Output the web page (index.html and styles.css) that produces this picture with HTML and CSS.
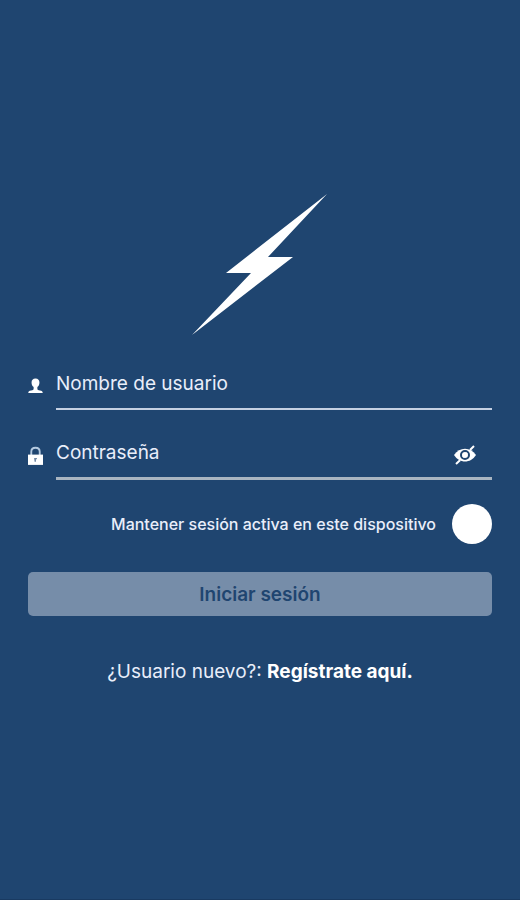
FILE: index.html
```html
<!DOCTYPE html>
<html lang="es">
<head>
<meta charset="utf-8">
<meta name="viewport" content="width=device-width, initial-scale=1">
<title>Iniciar sesión</title>
<link rel="stylesheet" href="styles.css">
</head>
<body>
<main class="login">
  <svg class="logo" viewBox="0 0 136 142" aria-hidden="true"><path d="M135 0 34 79H59L0 141 101 63H76Z"/></svg>
  <form class="form">
    <div class="field">
      <label class="field-icon" for="user">
        <svg viewBox="0 0 16 20" aria-hidden="true"><path d="M8 2C5.200 2 3.800 3.800 3.800 6.200c0 2.200.8 3.900 2.200 4.900v2.200c0 .9-1 1.200-2.700 1.600C1.200 15.300.3 15.900.3 17.500h15.400c0-1.600-.9-2.200-3-2.600-1.700-.4-2.700-.7-2.700-1.600v-2.200c1.400-1 2.200-2.700 2.200-4.900C12.200 3.800 10.800 2 8 2Z"/></svg>
      </label>
      <div class="box">
        <input id="user" class="input" type="text" placeholder="Nombre de usuario" aria-label="Nombre de usuario">
      </div>
    </div>
    <div class="field">
      <label class="field-icon" for="pass">
        <svg viewBox="0 0 16 20" aria-hidden="true"><path class="shackle" d="M3.500 9V5.500C3.500 2.500 5.500 1.200 8 1.200s4.500 1.300 4.500 4.300V9"/><path d="M0 8.500h16V19.500H0Z"/><path class="keyhole" d="M6.500 12h3v1.500H8.500V16h-1.500Z"/></svg>
      </label>
      <div class="box box-strong">
        <input id="pass" class="input" type="password" placeholder="Contraseña" aria-label="Contraseña">
        <button class="reveal" type="button" aria-label="Mostrar contraseña">
          <svg viewBox="0 0 24 20" aria-hidden="true"><path d="M1 10C4 6 7.800 3.800 12 3.800S20 6 23 10c-3 4.500-6.800 6.500-11 6.500S4 14.500 1 10Z"/><circle class="iris" cx="12" cy="10" r="4"/><path class="slash" d="M3 19 7 15.200M10 12l4-4M17 5l4-4"/></svg>
        </button>
      </div>
    </div>
    <div class="remember">
      <label for="keep">Mantener sesión activa en este dispositivo</label>
      <input id="keep" class="switch" type="checkbox">
    </div>
    <button class="submit" type="submit" disabled>Iniciar sesión</button>
  </form>
  <p class="signup">¿Usuario nuevo?: <a href="#registro">Regístrate aquí.</a></p>
</main>
</body>
</html>
```
FILE: styles.css
```css
* { box-sizing: border-box; }

body {
  margin: 0;
  background: #1f4570;
  color: #e9eefa;
  font-family: Inter, "Liberation Sans", sans-serif;
}

.login {
  display: flex;
  flex-direction: column;
  align-items: center;
  min-height: 100vh;
  padding: 194px 28px 0;
  border-bottom: 1px solid #193a61;
}

.logo { width: 136px; height: 142px; fill: #fff; }

.form {
  display: flex;
  flex-direction: column;
  width: 100%;
  margin-top: 28px;
}

.field {
  display: flex;
  align-items: center;
  margin-bottom: 24px;
}

.field-icon { width: 28px; height: 22px; }
.field-icon svg { display: block; width: 15px; height: 20px; fill: #fff; }
.field-icon .shackle { fill: none; stroke: #b5cae0; stroke-width: 2; }
.field-icon .keyhole { fill: #7187a3; }

.box {
  display: flex;
  flex: 1;
  align-items: center;
  height: 46px;
  padding-bottom: 2px;
  border-bottom: 2px solid #c5d0e2;
}
.box-strong { border-bottom: 3px solid #a9b5c1; }

.input {
  flex: 1;
  min-width: 0;
  height: 40px;
  padding: 0 0 4px;
  border: 0;
  outline: 0;
  background: transparent;
  color: inherit;
  font: 400 19px/24px Inter, "Liberation Sans", sans-serif;
}
.input::placeholder { color: inherit; opacity: 1; }

.reveal {
  width: 24px;
  height: 20px;
  margin-right: 15px;
  padding: 0;
  border: 0;
  background: none;
}
.reveal svg { display: block; width: 24px; height: 20px; fill: #fff; }
.reveal .iris { fill: #fff; stroke: #1f4570; stroke-width: 2; }
.reveal .slash { fill: none; stroke: #fff; stroke-width: 2; }

.remember {
  display: flex;
  align-items: center;
  justify-content: flex-end;
  gap: 16px;
  font-size: 16px;
  font-weight: 500;
  line-height: 20px;
}

.switch {
  appearance: none;
  width: 40px;
  height: 40px;
  margin: 0;
  border-radius: 50%;
  background: #fff;
}

.submit {
  height: 44px;
  margin-top: 28px;
  padding: 2px 0 0;
  border: 0;
  border-radius: 5px;
  background: #768da9;
  color: #1f4570;
  font: 600 19px/24px Inter, "Liberation Sans", sans-serif;
}

.signup {
  margin: 44px 0 0;
  font-size: 19px;
  line-height: 24px;
}
.signup a { color: #fff; font-weight: 700; text-decoration: none; }
```
